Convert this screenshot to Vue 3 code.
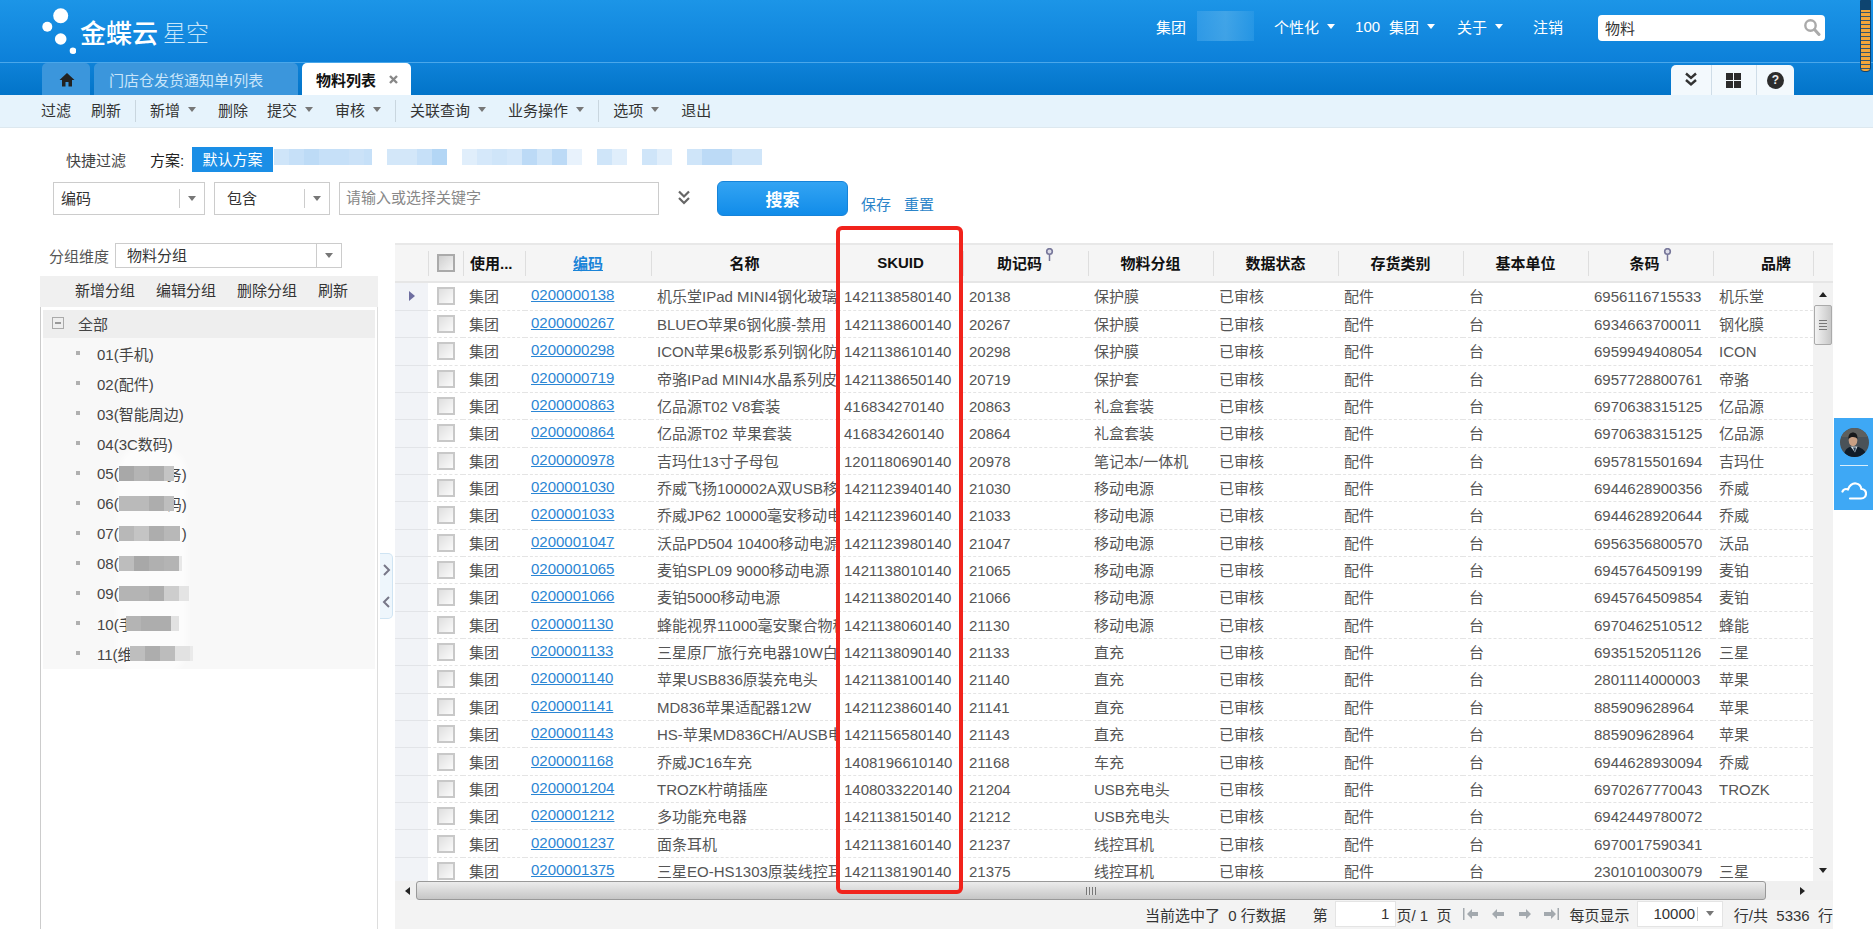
<script setup>
// material list page: header, tabs, toolbar, filter, group tree and grid
const rows = [
  ['0200000138', '机乐堂IPad MINI4钢化玻璃膜', '1421138580140', '20138', '保护膜', '6956116715533', '机乐堂'],
  ['0200000267', 'BLUEO苹果6钢化膜-禁用', '1421138600140', '20267', '保护膜', '6934663700011', '钢化膜'],
  ['0200000298', 'ICON苹果6极影系列钢化防爆膜', '1421138610140', '20298', '保护膜', '6959949408054', 'ICON'],
  ['0200000719', '帝骆IPad MINI4水晶系列皮套', '1421138650140', '20719', '保护套', '6957728800761', '帝骆'],
  ['0200000863', '亿品源T02 V8套装', '416834270140', '20863', '礼盒套装', '6970638315125', '亿品源'],
  ['0200000864', '亿品源T02 苹果套装', '416834260140', '20864', '礼盒套装', '6970638315125', '亿品源'],
  ['0200000978', '吉玛仕13寸子母包', '1201180690140', '20978', '笔记本/一体机', '6957815501694', '吉玛仕'],
  ['0200001030', '乔威飞扬100002A双USB移动电源', '1421123940140', '21030', '移动电源', '6944628900356', '乔威'],
  ['0200001033', '乔威JP62 10000毫安移动电源', '1421123960140', '21033', '移动电源', '6944628920644', '乔威'],
  ['0200001047', '沃品PD504 10400移动电源', '1421123980140', '21047', '移动电源', '6956356800570', '沃品'],
  ['0200001065', '麦铂SPL09 9000移动电源', '1421138010140', '21065', '移动电源', '6945764509199', '麦铂'],
  ['0200001066', '麦铂5000移动电源', '1421138020140', '21066', '移动电源', '6945764509854', '麦铂'],
  ['0200001130', '蜂能视界11000毫安聚合物移动电源', '1421138060140', '21130', '移动电源', '6970462510512', '蜂能'],
  ['0200001133', '三星原厂旅行充电器10W白色', '1421138090140', '21133', '直充', '6935152051126', '三星'],
  ['0200001140', '苹果USB836原装充电头', '1421138100140', '21140', '直充', '2801114000003', '苹果'],
  ['0200001141', 'MD836苹果适配器12W', '1421123860140', '21141', '直充', '885909628964', '苹果'],
  ['0200001143', 'HS-苹果MD836CH/AUSB电源适配器', '1421156580140', '21143', '直充', '885909628964', '苹果'],
  ['0200001168', '乔威JC16车充', '1408196610140', '21168', '车充', '6944628930094', '乔威'],
  ['0200001204', 'TROZK柠萌插座', '1408033220140', '21204', 'USB充电头', '6970267770043', 'TROZK'],
  ['0200001212', '多功能充电器', '1421138150140', '21212', 'USB充电头', '6942449780072', ''],
  ['0200001237', '面条耳机', '1421138160140', '21237', '线控耳机', '6970017590341', ''],
  ['0200001375', '三星EO-HS1303原装线控耳机', '1421138190140', '21375', '线控耳机', '2301010030079', '三星'],
]

const colWidths = [33, 35, 62, 126, 187, 125, 125, 125, 125, 125, 125, 125, 100]

// blurred parts of the screenshot, one colour per mosaic cell
const planChips = [
  ['#cfe5f9', '#c6e0f8', '#bddbf6', '#c6e0f8', '#c6e0f8', '#cbe2f8', '#c6e0f8'],
  ['#d3e7f9', '#d3e7f9', '#c6e0f8', '#b3d6f5'],
  ['#e0eefb', '#d5e8fa', '#cfe5f9', '#d5e8fa', '#bcdaf6', '#cfe5f9', '#bcdaf6', '#e8f2fc'],
  ['#cfe5f9', '#e0eefb'],
  ['#cfe5f9', '#e0eefb'],
  ['#cfe5f9', '#bcdaf6', '#bcdaf6', '#cfe5f9', '#cfe5f9'],
]

const tree = [
  { before: '01(手机)' },
  { before: '02(配件)' },
  { before: '03(智能周边)' },
  { before: '04(3C数码)' },
  { before: '05(', after: '务)', covered: true, width: 55, cells: ['#a8a8a8', '#b4b4b4', '#adadad', '#c4c4c4'] },
  { before: '06(', after: '码)', covered: true, width: 55, cells: ['#bababa', '#bababa', '#adadad', '#bebebe'] },
  { before: '07(', after: ')', width: 61, cells: ['#b8b8b8', '#c4c4c4', '#adadad', '#b8b8b8', '#b8b8b8'] },
  { before: '08(', width: 63, cells: ['#bdbdbd', '#a8a8a8', '#b0b0b0', '#b4b4b4', '#e8e8e8'] },
  { before: '09(', width: 70, cells: ['#b4b4b4', '#b4b4b4', '#adadad', '#cdcdcd', '#e4e4e4'] },
  { before: '10(手', left: -8, width: 53, cells: ['#b4b4b4', '#adadad', '#adadad', '#e2e2e2'] },
  { before: '11(维', left: -3, width: 63, cells: ['#bebebe', '#adadad', '#bcbcbc', '#e2e2e2', '#eaeaea'] },
]
</script>

<template>
  <div class="page">
    <header class="top">
      <svg class="logo-dots" width="36" height="62" viewBox="0 0 36 62">
        <circle cx="20.700" cy="15.700" r="7.500" fill="#fff" />
        <circle cx="7.300" cy="26.700" r="5" fill="#fff" />
        <circle cx="20.700" cy="39" r="5.800" fill="#fff" />
        <circle cx="33" cy="50.700" r="3.300" fill="#fff" />
      </svg>
      <span class="logo-name">金蝶云</span>
      <span class="logo-sub">星空</span>
      <div class="top-links">
        <span>集团</span>
        <span class="user-blur"></span>
        <span class="m20">个性化</span><i class="caret white"></i>
        <span class="m20">100</span><span class="m9">集团</span><i class="caret white"></i>
        <span class="m22">关于</span><i class="caret white"></i>
        <span class="m28">注销</span>
      </div>
      <div class="top-search">
        <span>物料</span>
        <svg width="18" height="18" viewBox="0 0 18 18">
          <circle cx="7.500" cy="7.500" r="5.200" fill="none" stroke="#aaa" stroke-width="2.400" />
          <path d="M11.500 11.500l4.500 5" stroke="#aaa" stroke-width="3" stroke-linecap="round" />
        </svg>
      </div>
    </header>

    <nav class="tabbar">
      <div class="tab home">
        <svg width="16" height="15" viewBox="0 0 16 15">
          <path d="M8 1L.5 8H3v6.500h3.500V10h3v4.500H13V8h2.500z" fill="#222" />
        </svg>
      </div>
      <div class="tab">门店仓发货通知单I列表</div>
      <div class="tab active">
        <b>物料列表</b>
        <svg width="11" height="11" viewBox="0 0 11 11">
          <path d="M2 2l7 7M9 2l-7 7" stroke="#888" stroke-width="2.400" />
        </svg>
      </div>
      <div class="tools">
        <span class="tool">
          <svg width="14" height="16" viewBox="0 0 14 16">
            <path d="M2 1.500l5 4.500 5-4.500M2 8l5 4.500L12 8" fill="none" stroke="#333" stroke-width="2.400" />
          </svg>
        </span>
        <span class="tool wide">
          <svg width="15" height="15" viewBox="0 0 15 15">
            <path d="M0 0h7v7H0zM8 0h7v7H8zM0 8h7v7H0zM8 8h7v7H8z" fill="#2b2b2b" />
          </svg>
        </span>
        <span class="tool"><span class="help">?</span></span>
      </div>
    </nav>

    <div class="toolbar">
      <span>过滤</span><span class="g20">刷新</span><i class="sep"></i>
      <span>新增</span><i class="caret"></i><span class="g22">删除</span>
      <span class="g19">提交</span><i class="caret"></i>
      <span class="g22">审核</span><i class="caret"></i><i class="sep"></i>
      <span>关联查询</span><i class="caret"></i>
      <span class="g22">业务操作</span><i class="caret"></i><i class="sep"></i>
      <span>选项</span><i class="caret"></i>
      <span class="g22">退出</span>
    </div>

    <section class="filter">
      <div class="plans">
        <span class="quick">快捷过滤</span>
        <span class="plan-label">方案:</span>
        <span class="plan-on">默认方案</span>
        <span v-for="(chip, i) in planChips" :key="i" class="chip">
          <i v-for="(c, j) in chip" :key="j" :style="{ background: c }"></i>
        </span>
      </div>
      <div class="query">
        <div class="combo field"><span>编码</span><em><i class="caret"></i></em></div>
        <div class="combo op"><span>包含</span><em><i class="caret"></i></em></div>
        <div class="keyword">请输入或选择关键字</div>
        <svg class="more" width="14" height="16" viewBox="0 0 14 16">
          <path d="M2 1.500l5 5 5-5M2 8l5 5 5-5" fill="none" stroke="#666" stroke-width="2.200" />
        </svg>
        <button class="search">搜索</button>
        <a class="act">保存</a>
        <a class="act">重置</a>
      </div>
    </section>

    <section class="content">
      <aside class="side">
        <div class="dim">
          <span>分组维度</span>
          <div class="combo dim-box"><span>物料分组</span><em><i class="caret"></i></em></div>
        </div>
        <div class="side-bar">
          <span>新增分组</span><span>编辑分组</span><span>删除分组</span><span>刷新</span>
        </div>
        <div class="tree">
          <div class="tree-list">
            <div class="tree-root">
              <i class="minus"></i>
              <span>全部</span>
            </div>
            <div class="wash"></div>
            <div v-for="item in tree" :key="item.before" class="tree-item">
              <i class="dot"></i>
              <span>{{ item.before }}</span>
              <span v-if="item.cells" class="mosaic" :style="{ width: item.width + 'px', marginLeft: (item.left || 0) + 'px' }">
                <i v-for="(c, j) in item.cells" :key="j" :style="{ background: c }"></i>
              </span>
              <span v-if="item.after" :class="{ covered: item.covered, tail: !item.covered }">{{ item.after }}</span>
            </div>
          </div>
        </div>
      </aside>

      <div class="splitter">
        <svg width="9" height="12" viewBox="0 0 9 12"><path d="M2 1l5 5-5 5" fill="none" stroke="#778" stroke-width="2" /></svg>
        <svg width="9" height="12" viewBox="0 0 9 12"><path d="M7 1L2 6l5 5" fill="none" stroke="#778" stroke-width="2" /></svg>
      </div>

      <div class="grid">
        <table class="head">
          <colgroup>
            <col v-for="(w, i) in colWidths" :key="i" :style="{ width: w + 'px' }" />
            <col style="width: 20px" />
          </colgroup>
          <thead>
            <tr>
              <th></th>
              <th class="th-check"><i class="check dark"></i></th>
              <th class="th-left">使用...</th>
              <th class="th-link">编码</th>
              <th>名称</th>
              <th>SKUID</th>
              <th>助记码<svg class="pin" width="9" height="13" viewBox="0 0 9 13"><circle cx="4.500" cy="3.500" r="2.800" fill="#dcdce8" stroke="#77779a" stroke-width="1.600" /><path d="M4.500 6v7" stroke="#77779a" stroke-width="1.500" /></svg></th>
              <th>物料分组</th>
              <th>数据状态</th>
              <th>存货类别</th>
              <th>基本单位</th>
              <th>条码<svg class="pin" width="9" height="13" viewBox="0 0 9 13"><circle cx="4.500" cy="3.500" r="2.800" fill="#dcdce8" stroke="#77779a" stroke-width="1.600" /><path d="M4.500 6v7" stroke="#77779a" stroke-width="1.500" /></svg></th>
              <th class="th-brand">品牌</th>
              <th></th>
            </tr>
          </thead>
        </table>

        <div class="grid-main">
          <div class="rows">
            <table class="body">
              <colgroup>
                <col v-for="(w, i) in colWidths" :key="i" :style="{ width: w + 'px' }" />
              </colgroup>
              <tbody>
                <tr v-for="(r, i) in rows" :key="r[0]">
                  <td class="gutter"><i v-if="i === 0" class="marker"></i></td>
                  <td class="td-check"><i class="check"></i></td>
                  <td>集团</td>
                  <td><a class="code">{{ r[0] }}</a></td>
                  <td>{{ r[1] }}</td>
                  <td>{{ r[2] }}</td>
                  <td>{{ r[3] }}</td>
                  <td>{{ r[4] }}</td>
                  <td>已审核</td>
                  <td>配件</td>
                  <td>台</td>
                  <td>{{ r[5] }}</td>
                  <td>{{ r[6] }}</td>
                </tr>
              </tbody>
            </table>
          </div>
          <div class="vscroll">
            <i class="arrow-up"></i>
            <div class="vthumb"><i></i></div>
            <i class="arrow-down"></i>
          </div>
        </div>

        <div class="hscroll">
          <i class="arrow-left"></i>
          <div class="hthumb"><i></i></div>
          <i class="arrow-right"></i>
        </div>

        <div class="pager">
          <span>当前选中了&nbsp;&nbsp;0 行数据</span>
          <span class="p-first">第</span>
          <span class="p-input">1</span>
          <span>页/ 1&nbsp;&nbsp;页</span>
          <span class="p-icons">
            <svg width="96" height="12" viewBox="0 0 96 12" fill="#a3a9ae">
              <path d="M0 0h1.500v12H0zM4 6l5-5v3h6v4H9v3zM29 6l5-5v3h7v4h-7v3zM56 4h7V1l5 5-5 5V8h-7zM81 4h7V1l5 5-5 5V8h-7zM94.500 0H96v12h-1.500z" />
            </svg>
          </span>
          <span>每页显示</span>
          <div class="combo page-size"><span>10000</span><em><i class="caret"></i></em></div>
          <span class="p-total">行/共&nbsp;&nbsp;5336&nbsp;&nbsp;行</span>
        </div>
      </div>
    </section>

    <!-- the red mark lies over the grid -->
    <div class="mark"></div>

    <div class="float-bar">
      <svg class="avatar" width="29" height="29" viewBox="0 0 29 29">
        <defs><clipPath id="av"><circle cx="14.500" cy="14.500" r="14.500" /></clipPath></defs>
        <g clip-path="url(#av)">
          <rect width="29" height="29" fill="#4a5258" />
          <rect width="29" height="9" fill="#5d5f5e" />
          <ellipse cx="13" cy="12.500" rx="4.300" ry="5.700" fill="#c9a084" />
          <path d="M8.500 11c-.5-4.500 2-6.500 4.500-6.500s5 2 4.400 6.500c-1.500-2.500-6.500-3-8.900 0z" fill="#17191b" />
          <path d="M4 29c0-7 3-10 9-10.500S26 21 27 29z" fill="#101c28" />
          <path d="M10.500 18.500l4.500 6 2.500-6z" fill="#cfd8dd" />
          <path d="M13 19.500l2 5 1-5z" fill="#2d4258" />
        </g>
      </svg>
      <i class="float-line"></i>
      <svg width="26" height="18" viewBox="0 0 26 18">
        <path d="M1.500 9.500C2.500 7 5 6.500 7 7.500 8 3.500 11.500 1 15 1.500c3 .4 5 2.700 5.300 5.500 2.700-.2 4.700 2 4.700 4.500 0 2.800-2 5-5 5H9" fill="none" stroke="#fff" stroke-width="2.200" stroke-linecap="round" stroke-linejoin="round" />
      </svg>
    </div>

    <div class="edge-handle"></div>
  </div>
</template>

<style>
html,
body {
  margin: 0;
  background: #fff;
  overflow: hidden;
}
</style>

<style scoped>
.page {
  position: relative;
  width: 1873px;
  height: 929px;
  overflow: hidden;
  display: flex;
  flex-direction: column;
  font-family: "Liberation Sans", "Noto Sans CJK SC", sans-serif;
  font-size: 15px;
  color: #444;
}

i {
  font-style: normal;
  display: inline-block;
}

.caret {
  width: 0;
  height: 0;
  border-left: 4px solid transparent;
  border-right: 4px solid transparent;
  border-top: 5px solid #777;
  margin-left: 8px;
}
.caret.white {
  border-top-color: #fff;
}

/* header */
.top {
  height: 62px;
  flex: none;
  display: flex;
  align-items: center;
  background: linear-gradient(#1c95e7, #0c80d9);
  color: #fff;
}
.logo-dots {
  margin-left: 40px;
}
.logo-name {
  margin-left: 4px;
  font-size: 26px;
  font-weight: 500;
}
.logo-sub {
  margin-left: 5px;
  font-size: 23px;
  font-weight: 300;
  color: #c4e5fa;
}
.top-links {
  margin-left: 947px;
  display: flex;
  align-items: center;
  width: 442px;
  margin-top: -10px;
}
.user-blur {
  width: 57px;
  height: 30px;
  margin-left: 11px;
  background: linear-gradient(90deg, #3aa0e9, #52ade9 50%, #2c9ae6);
  opacity: 0.7;
}
.m20 {
  margin-left: 20px;
}
.m22 {
  margin-left: 22px;
}
.m9 {
  margin-left: 9px;
}
.m28 {
  margin-left: 30px;
}
.top-search {
  width: 227px;
  height: 26px;
  margin-top: -6px;
  box-sizing: border-box;
  padding: 0 4px 2px 7px;
  display: flex;
  align-items: center;
  justify-content: space-between;
  background: #fff;
  border-radius: 4px;
  color: #333;
}

/* tabs */
.tabbar {
  height: 33px;
  flex: none;
  box-sizing: border-box;
  border-top: 1px solid #4aa7ea;
  padding-left: 42px;
  display: flex;
  align-items: flex-end;
  background: linear-gradient(#0e82d8, #0274c9);
}
.tab {
  height: 32px;
  width: 204px;
  box-sizing: border-box;
  margin-right: 4px;
  padding-left: 15px;
  display: flex;
  align-items: center;
  background: #3b96dc;
  border-radius: 5px 5px 0 0;
  color: #c9e5fa;
}
.tab.home {
  width: 48px;
  padding-left: 17px;
}
.tab.active {
  width: 109px;
  padding-left: 14px;
  background: #fff;
  color: #111;
}
.tab.active b {
  margin-right: 12px;
}
.tools {
  margin-left: auto;
  margin-right: 79px;
  width: 123px;
  height: 30px;
  display: flex;
  background: #f3f9fd;
  border-radius: 5px 5px 0 0;
}
.tool {
  width: 41px;
  display: flex;
  align-items: center;
  justify-content: center;
  border-right: 1px solid #cfdde8;
}
.tool.wide {
  width: 44px;
}
.tool:last-child {
  width: 38px;
  border: none;
}
.help {
  width: 17px;
  height: 17px;
  border-radius: 50%;
  background: #2d2d2d;
  color: #eee;
  font-size: 12px;
  font-weight: 700;
  line-height: 17px;
  text-align: center;
}

/* toolbar */
.toolbar {
  height: 33px;
  flex: none;
  box-sizing: border-box;
  padding: 0 0 3px 41px;
  display: flex;
  align-items: center;
  background: #e6f3fc;
  border-bottom: 1px solid #dde8ef;
  color: #333;
}
.sep {
  width: 1px;
  height: 22px;
  background: #c9d6df;
  margin: 3px 14px 0;
}
.g19 {
  margin-left: 19px;
}
.g20 {
  margin-left: 20px;
}
.g22 {
  margin-left: 22px;
}

/* filter */
.filter {
  height: 115px;
  flex: none;
  box-sizing: border-box;
  padding-top: 19px;
}
.plans {
  height: 25px;
  padding-left: 66px;
  display: flex;
  align-items: center;
}
.quick {
  width: 84px;
}
.plan-label {
  width: 42px;
  color: #222;
}
.plan-on {
  width: 81px;
  height: 25px;
  margin-right: 1px;
  line-height: 25px;
  text-align: center;
  background: #1a8ee6;
  color: #fff;
}
.chip {
  display: flex;
  height: 16px;
  margin: 0 15px 6px 0;
}
.chip i {
  width: 15px;
  height: 16px;
}
.chip:nth-of-type(4) i:last-child {
  width: 8px;
}
.query {
  margin-top: 10px;
  margin-left: 53px;
  height: 33px;
  display: flex;
  align-items: flex-start;
}
.combo {
  box-sizing: border-box;
  display: flex;
  align-items: center;
  border: 1px solid #ccc;
  background: #fff;
  color: #333;
}
.combo > span {
  flex: 1;
  padding-bottom: 2px;
}
.combo em {
  width: 24px;
  height: 60%;
  display: flex;
  align-items: center;
  justify-content: center;
  border-left: 1px solid #ccc;
  font-style: normal;
}
.combo .caret {
  margin-left: 0;
}
.field {
  width: 152px;
  height: 33px;
  padding-left: 7px;
  margin-right: 9px;
}
.op {
  width: 116px;
  height: 33px;
  padding-left: 12px;
  margin-right: 9px;
}
.keyword {
  width: 320px;
  height: 33px;
  line-height: 29px;
  box-sizing: border-box;
  border: 1px solid #ccc;
  padding-left: 6px;
  color: #888;
}
.more {
  margin: 8px 26px 0 18px;
}
.search {
  width: 131px;
  height: 35px;
  margin-top: -1px;
  border: 1px solid #1683d9;
  border-radius: 6px;
  background: linear-gradient(#33a4f3, #118ce9);
  color: #fff;
  font: 700 17px "Liberation Sans", "Noto Sans CJK SC", sans-serif;
}
.act {
  margin: 11px 0 0 13px;
  color: #2a84c9;
}
.act + .act {
  margin-left: 13px;
}

/* left panel and grid */
.content {
  flex: 1;
  min-height: 0;
  display: flex;
}
.side {
  width: 338px;
  margin-left: 40px;
  display: flex;
  flex-direction: column;
}
.dim {
  height: 25px;
  padding-left: 9px;
  display: flex;
  align-items: center;
  color: #555;
}
.dim-box {
  width: 227px;
  height: 25px;
  margin-left: 6px;
  padding-left: 11px;
}
.dim-box em {
  height: 100%;
}
.side-bar {
  height: 31px;
  box-sizing: border-box;
  margin-top: 8px;
  padding: 0 0 4px 35px;
  display: flex;
  gap: 21px;
  align-items: center;
  background: #f0f0f0;
  color: #333;
}
.tree {
  flex: 1;
  box-sizing: border-box;
  padding: 3px 2px;
  border-left: 1px solid #ccc;
  border-right: 1px solid #ddd;
}
.tree-list {
  position: relative;
  background: #f8f8f8;
  height: 359px;
}
.tree-root {
  height: 28px;
  box-sizing: border-box;
  display: flex;
  align-items: center;
  background: #eeeeee;
  padding: 0 0 2px 9px;
}
.minus {
  position: relative;
  width: 10px;
  height: 10px;
  border: 1px solid #aaa;
  margin-right: 14px;
}
.minus::after {
  content: "";
  position: absolute;
  left: 2px;
  right: 2px;
  top: 4px;
  height: 2px;
  background: #999;
}
.tree-item {
  position: relative;
  height: 30px;
  display: flex;
  align-items: center;
  padding-left: 33px;
  color: #444;
}
.dot {
  width: 4px;
  height: 4px;
  background: #b0b0b0;
  margin-right: 17px;
}
.mosaic {
  display: flex;
  position: relative;
  z-index: 1;
  overflow: hidden;
}
.mosaic i {
  width: 15px;
  height: 15px;
  flex: none;
}
.covered {
  margin-left: -7px;
}
.tail {
  margin-left: 2px;
}
/* the soft white smear under the blurred names */
.wash {
  position: absolute;
  left: 74px;
  top: 135px;
  width: 70px;
  height: 232px;
  border-radius: 30px;
  background: rgba(255, 255, 255, 0.6);
  filter: blur(3px);
}
.splitter {
  width: 13px;
  height: 66px;
  margin: 310px 0 0 2px;
  box-sizing: border-box;
  display: flex;
  flex-direction: column;
  align-items: center;
  justify-content: space-around;
  border: 1px solid #cfe4f3;
  border-left: none;
  border-radius: 0 5px 5px 0;
  background: #eef6fc;
}
.grid {
  width: 1438px;
  margin-left: 2px;
  display: flex;
  flex-direction: column;
}
table {
  table-layout: fixed;
  border-collapse: collapse;
  width: 1418px;
}
.head {
  width: 1438px;
  height: 40px;
  flex: none;
  background: #f5f5f5;
  border-top: 2px solid #e8e8e8;
  border-bottom: 2px solid #e6e6e6;
}
th {
  padding: 0 0 2px;
  font-weight: 700;
  color: #111;
  white-space: nowrap;
  background: linear-gradient(#dedede, #dedede) left center / 1px 25px no-repeat;
}
th:first-child {
  background: none;
}
.th-left {
  text-align: left;
  padding-left: 7px;
}
.th-link {
  color: #1a84d8;
  text-decoration: underline;
}
.th-brand {
  padding-left: 26px;
}
.pin {
  position: relative;
  top: -8px;
  margin-left: 3px;
}
.th-check {
  padding-left: 9px;
  text-align: left;
}
.grid-main {
  height: 598px;
  flex: none;
  display: flex;
}
.rows {
  width: 1418px;
  overflow: hidden;
}
.body tr {
  height: 27.350px;
}
td {
  padding: 2px 0 0 6px;
  white-space: nowrap;
  overflow: hidden;
  color: #555;
  border-bottom: 1px dashed #e4e4e4;
  line-height: 20px;
}
td.gutter {
  padding: 0 0 0 14px;
  background: #f1f3f7;
  border-bottom: 1px solid #e2e4e8;
}
td.td-check {
  padding: 0 0 0 9px;
  font-size: 0;
}
.marker {
  width: 0;
  height: 0;
  border-top: 5px solid transparent;
  border-bottom: 5px solid transparent;
  border-left: 6px solid #6e6ea0;
}
.code {
  color: #2b86d4;
  text-decoration: underline;
  position: relative;
  top: -2px;
}
.check {
  width: 18px;
  height: 18px;
  box-sizing: border-box;
  border: 2px solid #c8c8c8;
  background: linear-gradient(135deg, #dfdfdf, #fbfbfb);
  vertical-align: middle;
}
.check.dark {
  border-color: #aaa;
  background: linear-gradient(135deg, #cfcfcf, #f3f3f3);
}
.vscroll {
  width: 20px;
  background: #f2f2f2;
  display: flex;
  flex-direction: column;
  align-items: center;
}
.arrow-up,
.arrow-down {
  width: 0;
  height: 0;
  border-left: 4px solid transparent;
  border-right: 4px solid transparent;
}
.arrow-up {
  border-bottom: 5px solid #222;
  margin-top: 9px;
}
.vthumb {
  width: 18px;
  height: 40px;
  margin-top: 8px;
  box-sizing: border-box;
  border: 1px solid #aaa;
  border-radius: 2px;
  background: linear-gradient(90deg, #f3f3f3, #c8c8c8);
  display: flex;
  align-items: center;
  justify-content: center;
}
.vthumb i {
  width: 8px;
  height: 10px;
  background: repeating-linear-gradient(#777 0 1px, #ddd 1px 3px);
}
.arrow-down {
  border-top: 5px solid #222;
  margin-top: auto;
  margin-bottom: 8px;
}
.hscroll {
  height: 19px;
  flex: none;
  box-sizing: border-box;
  display: flex;
  align-items: center;
  background: #f0f0f0;
}
.arrow-left,
.arrow-right {
  width: 0;
  height: 0;
  border-top: 4px solid transparent;
  border-bottom: 4px solid transparent;
}
.arrow-left {
  border-right: 5px solid #222;
  margin-left: 10px;
}
.arrow-right {
  border-left: 5px solid #222;
  margin-left: 34px;
}
.hthumb {
  width: 1350px;
  height: 19px;
  margin-left: 6px;
  box-sizing: border-box;
  border: 1px solid #999;
  border-radius: 3px;
  background: linear-gradient(#ececec, #c6c6c6);
  display: flex;
  align-items: center;
  justify-content: center;
}
.hthumb i {
  width: 10px;
  height: 8px;
  background: repeating-linear-gradient(90deg, #777 0 1px, #ddd 1px 3px);
}
.pager {
  flex: 1;
  min-height: 0;
  box-sizing: border-box;
  display: flex;
  align-items: center;
  padding: 0 0 1px 750px;
  background: #f3f3f3;
  color: #333;
  white-space: nowrap;
}
.p-first {
  margin-left: 27px;
}
.p-input {
  width: 62px;
  height: 26px;
  box-sizing: border-box;
  margin-left: 7px;
  padding-right: 6px;
  line-height: 24px;
  text-align: right;
  background: #fff;
  border: 1px solid #e4e4e4;
}
.p-icons {
  margin: 0 10px 0 12px;
  display: flex;
}
.page-size {
  width: 86px;
  height: 26px;
  margin-left: 8px;
  padding-left: 15px;
  border-color: #e4e4e4;
}
.p-total {
  margin-left: 11px;
}

/* overlays */
.mark {
  position: absolute;
  left: 836px;
  top: 226px;
  width: 127px;
  height: 668px;
  box-sizing: border-box;
  border: 4px solid #f1231c;
  border-radius: 6px;
}
.float-bar {
  position: absolute;
  left: 1834px;
  top: 418px;
  width: 39px;
  height: 92px;
  background: #3ea8f5;
  display: flex;
  flex-direction: column;
  align-items: center;
  padding-top: 10px;
  box-sizing: border-box;
}
.avatar {
  margin-left: 2px;
}
.float-line {
  width: 28px;
  height: 1px;
  background: #d8eefc;
  margin: 8px 0 16px;
}
.edge-handle {
  position: absolute;
  left: 1860px;
  top: 0;
  width: 11px;
  height: 72px;
  box-sizing: border-box;
  border: 1px solid #0e4470;
  border-radius: 0 0 4px 4px;
  background:
    linear-gradient(#0e4470 0 9px, transparent 9px),
    repeating-linear-gradient(#f2a53a 0 3px, #33566f 3px 4px);
}
</style>
